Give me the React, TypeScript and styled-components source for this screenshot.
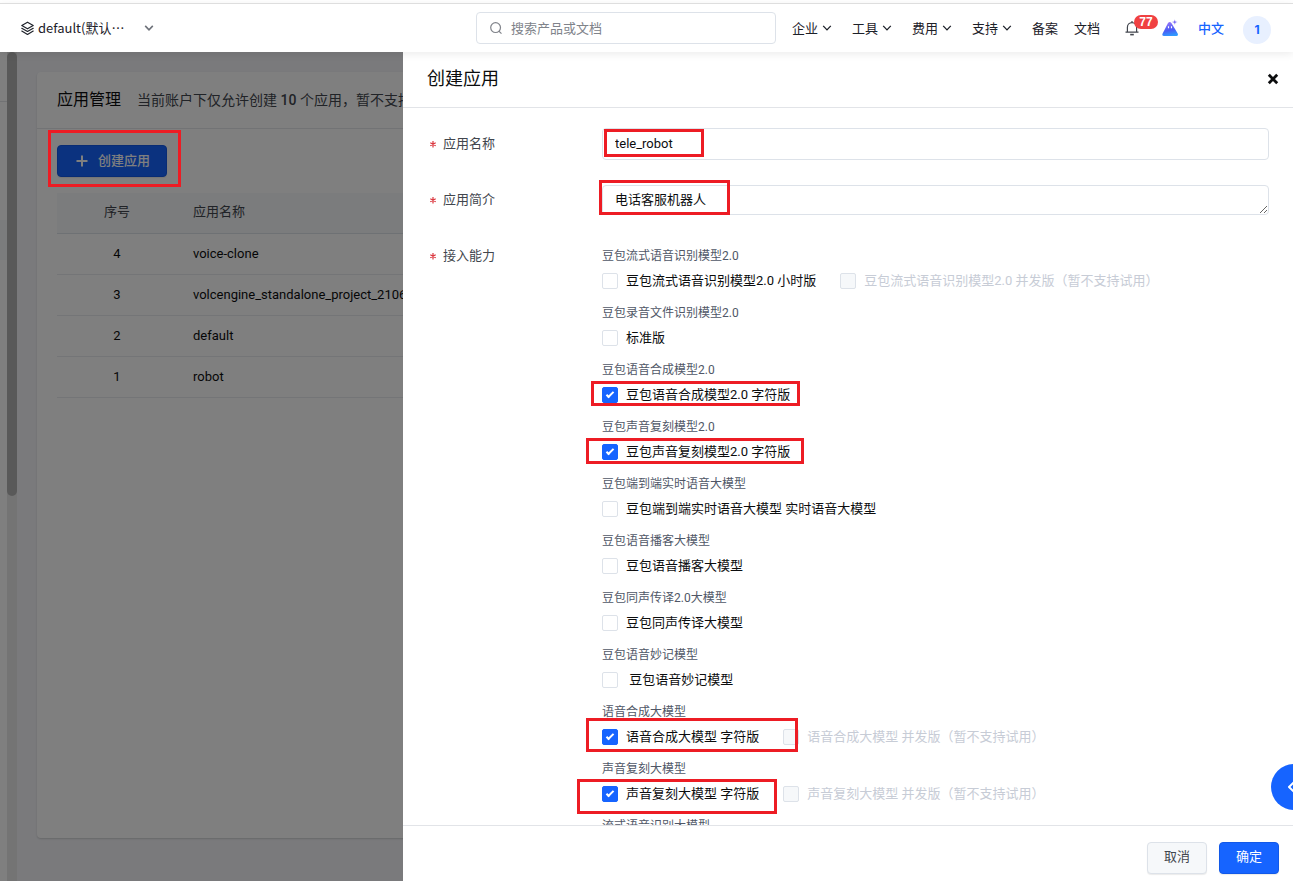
import React from "react";
import styled, { createGlobalStyle, css } from "styled-components";

const GlobalStyle = createGlobalStyle`
  *, *::before, *::after { box-sizing: border-box; }
  body {
    margin: 0;
    background: #fff;
    color: #0c0d0e;
    font: 13px/20px Roboto, "Noto Sans CJK SC", sans-serif;
  }
  button, input, textarea { font: inherit; color: inherit; }
  h1, h2, p, fieldset { margin: 0; padding: 0; border: 0; font-weight: 400; }
  a { color: inherit; text-decoration: none; }
  svg { display: block; flex: none; }
`;

const Page = styled.div`
  display: flex;
  flex-direction: column;
  height: 100vh;
  padding: 3px 0 6px;
`;

/* Top bar */

const TopBar = styled.header`
  position: relative;
  z-index: 3;
  flex: none;
  display: flex;
  align-items: center;
  justify-content: space-between;
  height: 49px;
  padding: 0 22px 0 20px;
  border-top: 1px solid #dedede;
  background: #fff;
  box-shadow: 0 2px 8px rgba(0, 0, 0, 0.08);
  font-family: "Noto Sans CJK SC", sans-serif;
`;

const ProjectButton = styled.button`
  display: flex;
  align-items: center;
  gap: 3px;
  padding: 0;
  border: 0;
  background: none;
  color: #1d2129;
`;

const ProjectName = styled.span`
  margin-right: 17px;
`;

const TopRight = styled.div`
  display: flex;
  align-items: center;
  gap: 16px;
`;

const SearchBox = styled.label`
  display: flex;
  align-items: center;
  gap: 8px;
  width: 300px;
  height: 32px;
  padding: 0 12px;
  border: 1px solid #dde2e9;
  border-radius: 4px;
  color: #80838a;
`;

const SearchInput = styled.input`
  flex: 1;
  min-width: 0;
  padding: 0;
  border: 0;
  outline: 0;
  background: none;
  &::placeholder { color: #80838a; opacity: 1; }
`;

const Nav = styled.nav`
  display: flex;
  align-items: center;
  gap: 20px;
  color: #1d2129;
`;

const NavLink = styled.a`
  display: flex;
  align-items: center;
  gap: 4px;
`;

const NavPair = styled.div`
  display: flex;
  gap: 16px;
`;

const Tools = styled.div`
  display: flex;
  align-items: center;
  gap: 19px;
  padding-left: 8px;
`;

const ToolIcons = styled.div`
  display: flex;
  align-items: center;
  gap: 22px;
`;

const IconButton = styled.button`
  position: relative;
  display: flex;
  padding: 0;
  border: 0;
  background: none;
  color: #42464e;
`;

const Badge = styled.span`
  position: absolute;
  top: -5px;
  left: 10px;
  width: 24px;
  height: 14px;
  border-radius: 7px;
  background: #f04142;
  color: #fff;
  font: 700 12px/14px "Liberation Sans", sans-serif;
  text-align: center;
`;

const Language = styled.a`
  color: #1664ff;
  font-weight: 500;
`;

const Avatar = styled.button`
  width: 28px;
  height: 28px;
  margin-top: 4px;
  padding: 0;
  border: 0;
  border-radius: 50%;
  background: #e8f0ff;
  color: #1664ff;
  font: 700 12px/28px Inter, sans-serif;
`;

/* Console page behind the drawer */

const Body = styled.div`
  position: relative;
  flex: 1;
  min-height: 0;
  display: flex;
  overflow: hidden;
  background: #f4f5f9;
`;

const SideEdge = styled.aside`
  flex: none;
  width: 7px;
  background: #fff;
`;

const SideHead = styled.div`
  height: 50px;
  margin-bottom: 118px;
  border-bottom: 1px solid #e2e4e8;
`;

const SideActive = styled.div`
  height: 40px;
  background: #f6f8fa;
`;

const ScrollTrack = styled.div`
  flex: none;
  width: 10px;
  background: #e8e8e8;
`;

const ScrollThumb = styled.div`
  height: 444px;
  border-radius: 5px;
  background: #b3b3b3;
`;

const Main = styled.main`
  flex: 1;
  min-width: 0;
  display: flex;
  padding: 20px 20px 43px;
`;

const Card = styled.section`
  flex: 1;
  min-width: 0;
  border-radius: 4px;
  background: #fff;
  box-shadow: 0 1px 2px rgba(0, 0, 0, 0.16);
`;

const CardHead = styled.div`
  display: flex;
  align-items: center;
  gap: 16px;
  height: 57px;
  padding: 0 20px 1px;
  border-bottom: 1px solid #e4e6ea;
  white-space: nowrap;
`;

const CardTitle = styled.h1`
  font-size: 16px;
`;

const CardNote = styled.p`
  color: #42464e;
  font-size: 14px;
  b { font-weight: 500; }
`;

const CardBody = styled.div`
  display: flex;
  flex-direction: column;
  align-items: flex-start;
  gap: 16px;
  padding: 16px 20px;
`;

const Anchor = styled.div<{ $fill?: boolean }>`
  position: relative;
  display: flex;
  ${(p) => p.$fill && css`width: 100%;`}
`;

const Table = styled.table`
  width: 100%;
  border-collapse: separate;
  border-spacing: 0;
  table-layout: fixed;
`;

const Cell = styled.td<{ $center?: boolean }>`
  height: 41px;
  padding: 0 16px;
  border-bottom: 1px solid #e8eaee;
  font-weight: 400;
  text-align: ${(p) => (p.$center ? "center" : "left")};
  white-space: nowrap;
`;

const HeadCell = styled(Cell)`
  padding-bottom: 2px;
  background: #f6f8fa;
  border-color: #dde2e9;
  color: #42464e;
`;

const NumberCol = styled.col`
  width: 120px;
`;

const Mask = styled.div`
  position: absolute;
  inset: 0;
  background: rgba(0, 0, 0, 0.5);
`;

/* Drawer */

const Drawer = styled.section`
  position: absolute;
  top: 0;
  right: 0;
  bottom: 0;
  display: flex;
  flex-direction: column;
  width: 890px;
  max-width: 100%;
  background: #fff;
`;

const DrawerHead = styled.div`
  flex: none;
  display: flex;
  align-items: center;
  justify-content: space-between;
  height: 56px;
  padding: 0 10px 2px 24px;
  border-bottom: 1px solid #e2e4e8;
`;

const DrawerTitle = styled.h2`
  font-size: 18px;
  line-height: 28px;
`;

const CloseButton = styled(IconButton)`
  padding: 4px;
  color: #0c0d0e;
`;

const Form = styled.form`
  flex: 1;
  min-height: 0;
  display: flex;
  flex-direction: column;
  gap: 24px;
  padding: 20px 24px 0;
  overflow-y: auto;
  scrollbar-width: none;
`;

const Row = styled.div`
  flex: none;
  display: grid;
  grid-template-columns: 175px minmax(0, 1fr);
`;

const RowLabel = styled.label`
  display: flex;
  align-items: center;
  gap: 6px;
  height: 31px;
  padding-left: 2px;
  color: #42464e;
`;

const Control = styled(Anchor)`
  align-items: center;
  height: 32px;
`;

const field = css`
  width: 100%;
  padding: 0 12px;
  border: 1px solid #dde2e9;
  border-radius: 4px;
  outline: 0;
  background: #fff;
`;

const TextInput = styled.input`
  ${field}
  height: 32px;
  padding-bottom: 2px;
`;

const TextArea = styled.textarea`
  ${field}
  display: block;
  height: 30px;
  padding-top: 3px;
  line-height: 22px;
  overflow: hidden;
  resize: vertical;
`;

const Groups = styled.div`
  display: flex;
  flex-direction: column;
  gap: 7px;
  padding-top: 5px;
`;

const GroupTitle = styled.div`
  color: #505767;
  font-size: 12px;
  line-height: 22px;
`;

const Options = styled(Anchor)`
  align-items: center;
  gap: 24px;
  height: 28px;
`;

const Option = styled.label<{ $disabled?: boolean }>`
  display: flex;
  align-items: center;
  gap: 8px;
  color: ${(p) => (p.$disabled ? "#c7ccd6" : "#0c0d0e")};
  white-space: pre;
`;

const CheckBox = styled.input`
  appearance: none;
  flex: none;
  display: grid;
  place-items: center;
  width: 16px;
  height: 16px;
  margin: 0;
  border: 1px solid #dde2e9;
  border-radius: 2px;
  background: #fff;
  &:disabled { background: #f6f8fa; }
  &:checked {
    border-color: #1664ff;
    background: #1664ff;
  }
  &:checked::after {
    content: "";
    width: 8px;
    height: 4px;
    margin-bottom: 2px;
    border: solid #fff;
    border-width: 0 0 2px 2px;
    transform: rotate(-45deg);
  }
`;

const DrawerFoot = styled.div`
  flex: none;
  display: flex;
  align-items: flex-start;
  justify-content: flex-end;
  gap: 12px;
  height: 56px;
  padding: 16px 14px 0;
  border-top: 1px solid #e2e4e8;
`;

const Button = styled.button<{ $primary?: boolean }>`
  display: flex;
  align-items: center;
  gap: 10px;
  height: 32px;
  padding: 0 16px 2px;
  border: 1px solid ${(p) => (p.$primary ? "#1259e8" : "#dde2e9")};
  border-radius: 4px;
  background: ${(p) => (p.$primary ? "#1664ff" : "#f6f8fa")};
  box-shadow: 0 1px 1px rgba(0, 0, 0, 0.08);
  color: ${(p) => (p.$primary ? "#fff" : "#42464e")};
`;

const CreateButton = styled(Button)`
  padding-bottom: 0;
  font-weight: 500;
`;

const FloatButton = styled.button`
  position: absolute;
  right: -24px;
  bottom: 71px;
  display: grid;
  place-items: center;
  width: 46px;
  height: 46px;
  padding: 0;
  border: 0;
  border-radius: 50%;
  background: #1664ff;
`;

interface Box {
  x: number;
  y: number;
  w: number;
  h: number;
}

/* Red frame that calls attention to a step; measured from its anchor. */
const Frame = styled.span<{ $box: Box }>`
  position: absolute;
  z-index: 1;
  left: ${(p) => p.$box.x}px;
  top: ${(p) => p.$box.y}px;
  width: ${(p) => p.$box.w}px;
  height: ${(p) => p.$box.h}px;
  border: 3px solid #ed1c24;
  pointer-events: none;
`;

const OverMask = styled.div`
  position: absolute;
  z-index: 1;
  left: 57px;
  top: 93px;
`;

const LayersIcon = () => (
  <svg width="15" height="15" viewBox="0 0 15 15" fill="none" stroke="currentColor" strokeWidth="1.2" strokeLinejoin="round" strokeLinecap="round">
    <path d="M7.5 1.2 13.200 4.500 7.500 7.800 1.800 4.500Z" />
    <path d="M1.800 7.300 7.500 10.500 13.200 7.300" />
    <path d="M1.800 10.100 7.500 13.400 13.200 10.100" />
  </svg>
);

const Chevron = ({ width = 1.3, color = "currentColor" }: { width?: number; color?: string }) => (
  <svg width="10" height="10" viewBox="0 0 10 10" fill="none" stroke={color} strokeWidth={width}>
    <path d="M1.200 2.900 5 6.900 8.800 2.900" />
  </svg>
);

const SearchIcon = () => (
  <svg width="14" height="14" viewBox="0 0 14 14" fill="none" stroke="currentColor" strokeWidth="1.200">
    <circle cx="6.600" cy="6.600" r="4.900" />
    <path d="M10 10.300 12.500 12.600" />
  </svg>
);

const BellIcon = () => (
  <svg width="16" height="16" viewBox="0 0 16 16" fill="none" stroke="currentColor" strokeWidth="1.200">
    <path d="M3.400 12V7.200a4.600 4.600 0 0 1 9.200 0V12M1.500 12.200h13M8 1v1.600" />
    <path d="M6.200 14.600h3.600" strokeWidth="1.600" />
  </svg>
);

const PeakIcon = () => (
  <svg width="17" height="18" viewBox="0 0 17 18">
    <defs>
      <linearGradient id="peak" x1="0.3" y1="0" x2="0.5" y2="1">
        <stop offset="0" stopColor="#9a78f8" />
        <stop offset="0.600" stopColor="#4a5cf5" />
        <stop offset="1" stopColor="#2f9bff" />
      </linearGradient>
    </defs>
    <path d="M6 4Q7.700 1.800 9.400 4L15.700 14.600Q16.500 17 14.400 17H2Q-.1 17 .5 14.800Z" fill="url(#peak)" />
    <path d="M6.500 7.200v2M9.500 7.200v2" stroke="#fff" strokeWidth="1.100" />
    <path d="M12.700.2 13.500 2.300 15.600 3.100 13.500 3.900 12.700 6 11.900 3.900 9.800 3.100 11.900 2.300Z" fill="#7a6cf5" stroke="#fff" strokeWidth=".5" />
  </svg>
);

const PlusIcon = () => (
  <svg width="14" height="14" viewBox="0 0 14 14" stroke="currentColor" strokeWidth="2">
    <path d="M8 1.500v11M2.500 7h11" />
  </svg>
);

const CloseIcon = () => (
  <svg width="12" height="12" viewBox="0 0 12 12" stroke="currentColor" strokeWidth="2.800">
    <path d="M1.800 1.800 10.200 10.200M10.200 1.800 1.800 10.200" />
  </svg>
);

const Star = () => (
  <svg width="8" height="8" viewBox="0 0 8 8" stroke="#db373f" strokeWidth="1.200">
    <path d="M4 1V7.400M1.300 2.700 6.700 5.700M6.700 2.700 1.300 5.700" />
  </svg>
);

const FloatIcon = () => (
  <svg width="14" height="14" viewBox="0 0 14 14" fill="none" stroke="#fff" strokeWidth="2" strokeLinejoin="round">
    <path d="M7 2.200 2 7 7 11.800 12 7Z" />
  </svg>
);

const apps: [number, string][] = [
  [4, "voice-clone"],
  [3, "volcengine_standalone_project_2106"],
  [2, "default"],
  [1, "robot"],
];

interface Group {
  title: string;
  label?: string;
  checked?: boolean;
  disabledLabel?: string;
  box?: Box;
}

const groups: Group[] = [
  { title: "豆包流式语音识别模型2.0", label: "豆包流式语音识别模型2.0 小时版", disabledLabel: "豆包流式语音识别模型2.0 并发版（暂不支持试用）" },
  { title: "豆包录音文件识别模型2.0", label: "标准版" },
  { title: "豆包语音合成模型2.0", label: "豆包语音合成模型2.0 字符版", checked: true, box: { x: -11, y: 0, w: 209, h: 25 } },
  { title: "豆包声音复刻模型2.0", label: "豆包声音复刻模型2.0 字符版", checked: true, box: { x: -16, y: 0, w: 218, h: 26 } },
  { title: "豆包端到端实时语音大模型", label: "豆包端到端实时语音大模型 实时语音大模型" },
  { title: "豆包语音播客大模型", label: "豆包语音播客大模型" },
  { title: "豆包同声传译2.0大模型", label: "豆包同声传译大模型" },
  { title: "豆包语音妙记模型", label: " 豆包语音妙记模型" },
  { title: "语音合成大模型", label: "语音合成大模型 字符版", checked: true, disabledLabel: "语音合成大模型 并发版（暂不支持试用）", box: { x: -16, y: -5, w: 212, h: 34 } },
  { title: "声音复刻大模型", label: "声音复刻大模型 字符版", checked: true, disabledLabel: "声音复刻大模型 并发版（暂不支持试用）", box: { x: -25, y: -1, w: 200, h: 35 } },
  { title: "流式语音识别大模型" },
];

export default function App() {
  return (
    <Page>
      <GlobalStyle />
      <TopBar>
        <ProjectButton type="button">
          <LayersIcon />
          <ProjectName>default(默认…</ProjectName>
          <Chevron width={1.6} color="#6e727a" />
        </ProjectButton>
        <TopRight>
          <SearchBox>
            <SearchIcon />
            <SearchInput type="search" placeholder="搜索产品或文档" />
          </SearchBox>
          <Nav>
            {["企业", "工具", "费用", "支持"].map((name) => (
              <NavLink href="#" key={name}>
                {name}
                <Chevron />
              </NavLink>
            ))}
            <NavPair>
              <NavLink href="#">备案</NavLink>
              <NavLink href="#">文档</NavLink>
            </NavPair>
          </Nav>
          <Tools>
            <ToolIcons>
              <IconButton type="button" aria-label="消息">
                <BellIcon />
                <Badge>77</Badge>
              </IconButton>
              <IconButton type="button" aria-label="助手">
                <PeakIcon />
              </IconButton>
            </ToolIcons>
            <Language href="#">中文</Language>
            <Avatar type="button">1</Avatar>
          </Tools>
        </TopRight>
      </TopBar>

      <Body>
        <SideEdge>
          <SideHead />
          <SideActive />
        </SideEdge>
        <ScrollTrack>
          <ScrollThumb />
        </ScrollTrack>
        <Main>
          <Card>
            <CardHead>
              <CardTitle>应用管理</CardTitle>
              <CardNote>
                当前账户下仅允许创建 <b>10</b> 个应用，暂不支持
              </CardNote>
            </CardHead>
            <CardBody>
              <CreateButton type="button" $primary>
                <PlusIcon />
                创建应用
              </CreateButton>
              <Table>
                <colgroup>
                  <NumberCol />
                  <col />
                </colgroup>
                <thead>
                  <tr>
                    <HeadCell as="th" $center>序号</HeadCell>
                    <HeadCell as="th">应用名称</HeadCell>
                  </tr>
                </thead>
                <tbody>
                  {apps.map(([id, name]) => (
                    <tr key={id}>
                      <Cell $center>{id}</Cell>
                      <Cell>{name}</Cell>
                    </tr>
                  ))}
                </tbody>
              </Table>
            </CardBody>
          </Card>
        </Main>
        <Mask />
        <OverMask>
          <Frame $box={{ x: -9, y: -15, w: 133, h: 57 }} />
        </OverMask>

        <Drawer role="dialog" aria-labelledby="drawer-title">
          <DrawerHead>
            <DrawerTitle id="drawer-title">创建应用</DrawerTitle>
            <CloseButton type="button" aria-label="关闭">
              <CloseIcon />
            </CloseButton>
          </DrawerHead>
          <Form>
            <Row>
              <RowLabel htmlFor="app-name"><Star />应用名称</RowLabel>
              <Control $fill>
                <TextInput id="app-name" defaultValue="tele_robot" />
                <Frame $box={{ x: 2, y: 1, w: 100, h: 28 }} />
              </Control>
            </Row>
            <Row>
              <RowLabel htmlFor="app-intro"><Star />应用简介</RowLabel>
              <Control $fill>
                <TextArea id="app-intro" rows={1} defaultValue="电话客服机器人" />
                <Frame $box={{ x: -3, y: -4, w: 131, h: 35 }} />
              </Control>
            </Row>
            <Row role="group" aria-labelledby="app-skills">
              <RowLabel as="div" id="app-skills"><Star />接入能力</RowLabel>
              <Groups>
                {groups.map((g) => (
                  <div key={g.title}>
                    <GroupTitle>{g.title}</GroupTitle>
                    {g.label && (
                      <Options>
                        <Option>
                          <CheckBox type="checkbox" defaultChecked={g.checked} />
                          {g.label}
                        </Option>
                        {g.disabledLabel && (
                          <Option $disabled>
                            <CheckBox type="checkbox" disabled />
                            {g.disabledLabel}
                          </Option>
                        )}
                        {g.box && <Frame $box={g.box} />}
                      </Options>
                    )}
                  </div>
                ))}
              </Groups>
            </Row>
          </Form>
          <DrawerFoot>
            <Button type="button">取消</Button>
            <Button type="submit" $primary>确定</Button>
          </DrawerFoot>
        </Drawer>
        <FloatButton type="button" aria-label="展开">
          <FloatIcon />
        </FloatButton>
      </Body>
    </Page>
  );
}
